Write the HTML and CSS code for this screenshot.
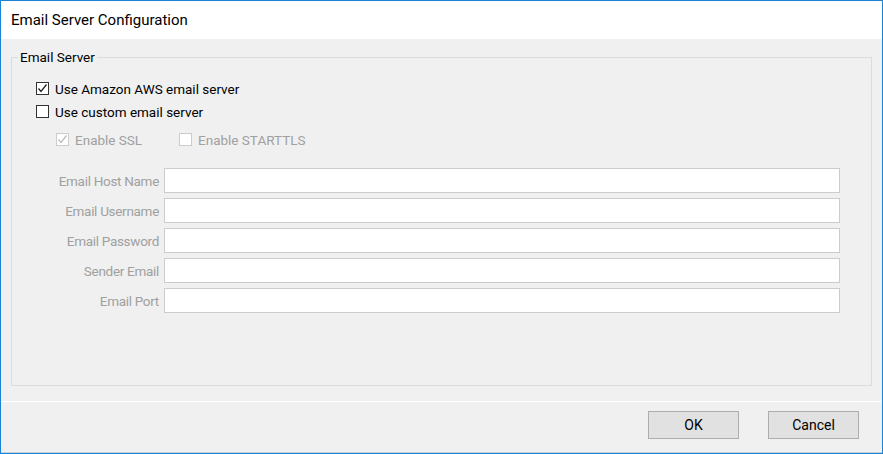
FILE: index.html
```html
<!DOCTYPE html>
<html lang="en">
<head>
  <meta charset="UTF-8" />
  <title>Email Server Configuration</title>
  <link rel="stylesheet" href="styles.css">
</head>
<body>
  <div class="window">
    <div class="titlebar">Email Server Configuration</div>

    <div class="content">
      <fieldset class="group">
        <legend>Email Server</legend>

        <label class="check">
          <span class="box"><svg viewBox="0 0 11 11"><polyline points="1.5,5.5 4,8.5 9.5,1.5" /></svg></span>
          Use Amazon AWS email server
        </label>
        <label class="check">
          <span class="box"></span>
          Use custom email server
        </label>

        <div class="options">
          <label class="check disabled ssl">
            <span class="box"><svg viewBox="0 0 11 11"><polyline points="1.5,5.5 4,8.5 9.5,1.5" /></svg></span>
            Enable SSL
          </label>
          <label class="check disabled">
            <span class="box"></span>
            Enable STARTTLS
          </label>
        </div>

        <div class="fields">
          <label for="host">Email Host Name</label>
          <input type="text" id="host" disabled />

          <label for="user">Email Username</label>
          <input type="text" id="user" disabled />

          <label for="pass">Email Password</label>
          <input type="password" id="pass" disabled />

          <label for="sender">Sender Email</label>
          <input type="text" id="sender" disabled />

          <label for="port">Email Port</label>
          <input type="text" id="port" disabled />
        </div>
      </fieldset>
    </div>

    <div class="footer">
      <button type="button">OK</button>
      <button type="button">Cancel</button>
    </div>
  </div>
</body>
</html>
```

FILE: styles.css
```css
body {
  margin: 0;
  font-family: Roboto, 'Liberation Sans', sans-serif;
  font-size: 13.5px;
  color: #000;
  background: #fff;
}
.window {
  width: 881px;
  height: 452px;
  border: 1px solid #1883d7;
  background: #f0f0f0;
}
.titlebar {
  height: 38px;
  line-height: 38px;
  padding-left: 10px;
  font-size: 15px;
  background: #fff;
}
.content {
  height: 362px;
  box-sizing: border-box;
  padding: 9px 0 0 10px;
}
.group {
  box-sizing: border-box;
  width: 861px;
  height: 338px;
  margin: 0;
  padding: 14px 0 0 24px;
  border: 1px solid #dcdcdc;
}
.group legend {
  line-height: 18px;
  padding: 0 2px;
  margin-left: -18px;
}
.check {
  display: flex;
  align-items: center;
  height: 17px;
  gap: 6px;
  margin-bottom: 6px;
}
.box {
  box-sizing: border-box;
  width: 13px;
  height: 13px;
  border: 1px solid #333;
  background: #fff;
  display: flex;
  align-items: center;
  justify-content: center;
}
.box svg {
  width: 11px;
  height: 11px;
  fill: none;
  stroke: #222;
  stroke-width: 1.3;
}
.check.disabled {
  color: #a0a0a0;
}
.check.disabled .box {
  border-color: #cccccc;
}
.check.disabled .box svg {
  stroke: #bcbcbc;
}
.options {
  display: flex;
  margin: 11px 0 0 20px;
}
.options .ssl {
  width: 123px;
}
.fields {
  display: grid;
  grid-template-columns: 123px 676px;
  grid-auto-rows: 25px;
  column-gap: 5px;
  row-gap: 5px;
  margin-top: 14px;
}
.fields label {
  color: #a0a0a0;
  text-align: right;
  align-self: center;
  white-space: nowrap;
  letter-spacing: -0.3px;
}
.fields input {
  box-sizing: border-box;
  height: 25px;
  border: 1px solid #cccccc;
  background: #fff;
  margin: 0;
}
.footer {
  box-sizing: border-box;
  height: 52px;
  border-top: 1px solid #fff;
  border-bottom: 1px solid #d0d0d0;
  display: flex;
  justify-content: flex-end;
  align-items: flex-start;
  gap: 29px;
  padding: 9px 23px 0 0;
}
.footer button {
  width: 91px;
  height: 28px;
  border: 1px solid #adadad;
  background: #e1e1e1;
  font-family: inherit;
  font-size: 14px;
  color: #000;
}
```
